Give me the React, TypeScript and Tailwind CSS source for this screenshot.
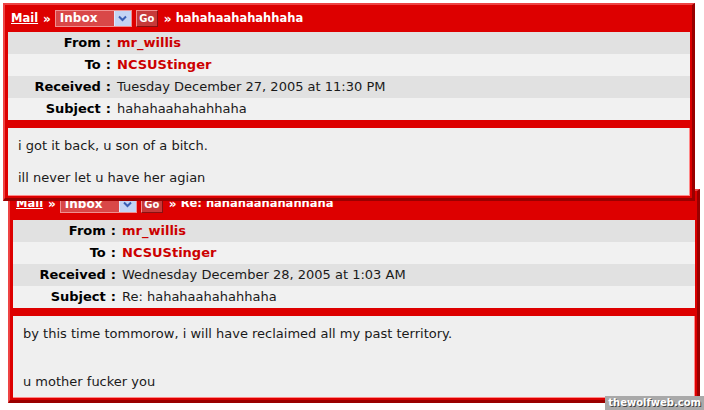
import React from "react";

interface MailWindowProps {
  className: string;
  headerHeight: string;
  subject: string;
  from: string;
  to: string;
  received: string;
  subjectLine: string;
  body: string[];
  bodyHeight: string;
}

function ChevronDown() {
  return (
    <svg width="9" height="7" viewBox="0 0 9 7">
      <path d="M1 1.5 L4.5 5 L8 1.5" fill="none" stroke="#3a5fb5" strokeWidth="2" />
    </svg>
  );
}

function MailWindow({ className, headerHeight, subject, from, to, received, subjectLine, body, bodyHeight }: MailWindowProps) {
  const rows = [
    { label: "From", value: from, link: true },
    { label: "To", value: to, link: true },
    { label: "Received", value: received, link: false },
    { label: "Subject", value: subjectLine, link: false },
  ];

  return (
    <div
      className={
        "absolute w-[692px] bg-[#dd0000] border-t-2 border-l-2 border-r-[3px] border-b-[3px] border-t-[#ee4444] border-l-[#ee4444] border-r-[#990000] border-b-[#990000] " +
        className
      }
    >
      <div className={"flex items-center pl-[6px] text-white font-bold text-[11.5px] " + headerHeight}>
        <span className="underline">Mail</span>
        <span className="ml-[5px] mr-[4px] text-[12px]">»</span>
        <div className="flex h-[17px] w-[77px] border border-[#f09090] bg-[#d94848]">
          <span className="flex-1 pl-[4px] leading-[15px] text-[12px]">Inbox</span>
          <span className="w-[17px] flex items-center justify-center bg-[#c4d4f4] border-l border-[#e0e8ff]">
            <ChevronDown />
          </span>
        </div>
        <span className="ml-[4px] h-[17px] w-[22px] flex items-center justify-center bg-[#c63a3a] border border-t-[#f09090] border-l-[#f09090] border-r-[#881111] border-b-[#881111] text-[10px]">
          Go
        </span>
        <span className="ml-[6px] text-[12px]">»</span>
        <span className="ml-[4px]">{subject}</span>
      </div>
      <div className="ml-[3px] mr-[2px] flex flex-col text-[13px]">
        {rows.map((row, i) => (
          <div
            key={row.label}
            className={
              "h-[22px] flex items-center " + (i % 2 === 0 ? "bg-[#e1e1e1]" : "bg-[#f1f1f1]")
            }
          >
            <span className="w-[103px] text-right font-bold text-black">
              {row.label}
              <span className="ml-[5px]">:</span>
            </span>
            <span className={"ml-[6px] " + (row.link ? "font-bold text-[#cc0000]" : "text-[#1a1a1a]")}>
              {row.value}
            </span>
          </div>
        ))}
      </div>
      <div className="h-[8px]" />
      <div
        className={
          "ml-[3px] mr-[2px] mb-[2px] bg-[#efefef] border-r border-b border-[#ff8888] pl-[10px] pt-[10px] text-[13px] leading-[16px] text-[#1a1a1a] " +
          bodyHeight
        }
      >
        {body.map((line, i) => (
          <div key={i} className="h-[16px]">
            {line}
          </div>
        ))}
      </div>
    </div>
  );
}

export default function App() {
  return (
    <div className="relative w-[704px] h-[410px] bg-white overflow-hidden font-['DejaVu_Sans',sans-serif]">
      <MailWindow
        className="left-[8px] top-[189px]"
        headerHeight="h-[29px] pb-[3px]"
        subject="Re: hahahaahahahhaha"
        from="mr_willis"
        to="NCSUStinger"
        received="Wednesday December 28, 2005 at 1:03 AM"
        subjectLine="Re: hahahaahahahhaha"
        body={["by this time tommorow, i will have reclaimed all my past territory.", "", "", "u mother fucker you"]}
        bodyHeight="h-[82px]"
      />
      <MailWindow
        className="left-[3px] top-[3px]"
        headerHeight="h-[27px]"
        subject="hahahaahahahhaha"
        from="mr_willis"
        to="NCSUStinger"
        received="Tuesday December 27, 2005 at 11:30 PM"
        subjectLine="hahahaahahahhaha"
        body={["i got it back, u son of a bitch.", "", "ill never let u have her agian"]}
        bodyHeight="h-[68px]"
      />
      <div className="absolute right-0 bottom-0 h-[14px] bg-[#a9a9a9] flex items-start px-[3px] pt-[1px] text-[10px] font-bold text-white leading-[12px] [text-shadow:1px_1px_0_#444]">
        thewolfweb.com
      </div>
    </div>
  );
}
